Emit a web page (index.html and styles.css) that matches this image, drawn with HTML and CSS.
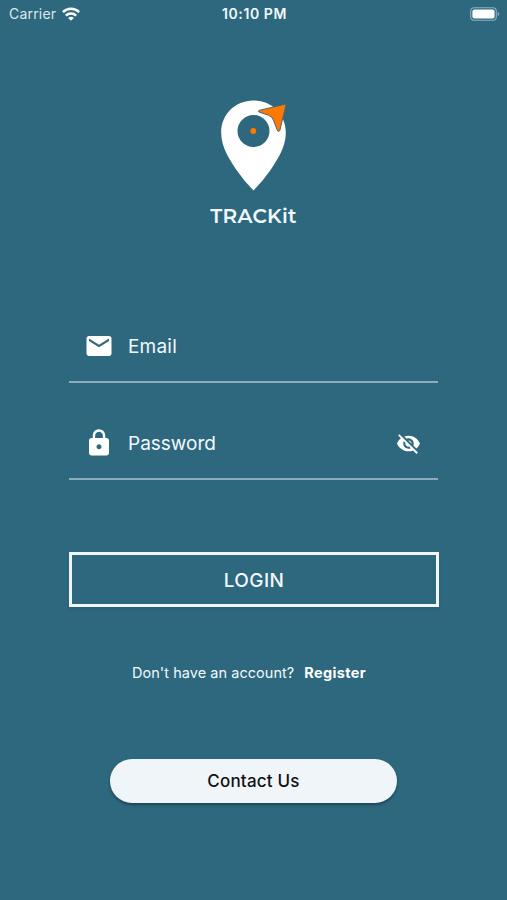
FILE: index.html
```html
<!DOCTYPE html>
<html lang="en">
<head>
  <meta charset="utf-8">
  <title>TRACKit</title>
  <link rel="stylesheet" href="styles.css">
</head>
<body>
  <!-- Status bar -->
  <header class="status-bar">
    <div class="carrier">
      <span>Carrier</span>
      <svg class="wifi" viewBox="0 0 18 14" fill="none" stroke="#fff" stroke-width="2.5">
        <path d="M.9 5.2C5.4.7 12.6.7 17.1 5.2"/>
        <path d="M3.8 8.6C6.7 5.8 11.3 5.8 14.2 8.6"/>
        <path d="M9 13.8 6.2 11Q9 8.7 11.8 11Z" fill="#fff" stroke="none"/>
      </svg>
    </div>
    <div class="time">10:10 PM</div>
    <svg class="battery" viewBox="0 0 30 14">
      <rect x=".7" y=".7" width="25.6" height="12.6" rx="3.5" fill="none" stroke="#8fb0be" stroke-width="1.1"/>
      <rect x="2.4" y="2.4" width="22.2" height="9.2" rx="2" fill="#fff"/>
      <path d="M27.7 5Q29.3 5.6 29.3 7T27.7 9Z" fill="#8fb0be"/>
    </svg>
  </header>

  <main class="login">
    <!-- Logo -->
    <div class="logo">
      <svg class="pin" viewBox="0 0 70 94">
        <path d="M34.5 1.5C16 1.5 2.2 15.5 2.2 33.5C2.2 49 11 61 17.5 71Q25 82 34.5 91.5Q44 82 51.5 71C58 61 66.8 49 66.8 33.5C66.8 15.5 53 1.5 34.5 1.5Z" fill="#fff"/>
        <circle cx="34.5" cy="32" r="16" fill="#2e687e"/>
        <circle cx="34.3" cy="32" r="3" fill="#ff7800"/>
        <path d="M67.2 5 40 11.4Q38.500 12.200 40 13L49.500 16.200Q53 17.500 54.400 21L58.500 31.800Q59.500 33.300 60.800 31.500Z" fill="#ff7800" stroke="#4d6570" stroke-width="1" stroke-linejoin="round"/>
      </svg>
      <h1 class="brand">TRACKit</h1>
    </div>

    <!-- Login form -->
    <form class="form">
      <div class="field">
        <svg class="icon" viewBox="0 0 24 24" fill="#fff">
          <path d="M20 4H4c-1.100 0-1.990.9-1.990 2L2 18c0 1.100.9 2 2 2h16c1.100 0 2-.9 2-2V6c0-1.100-.9-2-2-2zm0 4l-8 5-8-5V6l8 5 8-5v2z"/>
        </svg>
        <span class="label label-email">Email</span>
      </div>
      <div class="field">
        <svg class="icon" viewBox="0 0 24 24" fill="#fff">
          <path d="M18 8h-1V6c0-2.760-2.240-5-5-5S7 3.240 7 6v2H6c-1.100 0-2 .9-2 2v10c0 1.100.9 2 2 2h12c1.100 0 2-.9 2-2V10c0-1.100-.9-2-2-2zm-6 9c-1.100 0-2-.9-2-2s.9-2 2-2 2 .9 2 2-.9 2-2 2zm3.100-9H8.900V6c0-1.710 1.390-3.100 3.100-3.100 1.710 0 3.100 1.390 3.100 3.100v2z"/>
        </svg>
        <span class="label label-password">Password</span>
        <svg class="eye" viewBox="0 0 24 24" fill="#fff">
          <path d="M12 7c2.760 0 5 2.240 5 5 0 .65-.13 1.260-.36 1.830l2.920 2.920c1.510-1.260 2.700-2.890 3.430-4.750-1.730-4.390-6-7.500-11-7.500-1.400 0-2.740.25-3.980.7l2.160 2.160C10.740 7.130 11.350 7 12 7zM2 4.270l2.280 2.280.46.46C3.080 8.300 1.780 10.020 1 12c1.730 4.390 6 7.500 11 7.500 1.550 0 3.030-.3 4.380-.84l.42.42L19.730 22 21 20.730 3.270 3 2 4.270zM7.530 9.800l1.550 1.550c-.05.21-.08.43-.08.65 0 1.660 1.340 3 3 3 .22 0 .44-.03.65-.08l1.550 1.550c-.67.33-1.410.53-2.200.53-2.760 0-5-2.240-5-5 0-.79.2-1.530.53-2.200zm4.310-.78l3.150 3.150.02-.16c0-1.660-1.340-3-3-3l-.17.01z"/>
        </svg>
      </div>
      <button class="login-button" type="button">LOGIN</button>
    </form>

    <p class="signup"><span class="question">Don't have an account?</span><a class="register">Register</a></p>
    <button class="contact-button" type="button">Contact Us</button>
  </main>
</body>
</html>
```

FILE: styles.css
```css
/*Style for the page*/
body {
  margin: 0;
  height: 900px;
  background-color: #2e687e;
  color: #f2f8fc;
  font-family: Inter, "Liberation Sans", sans-serif;
  overflow: hidden;
}
/*Status bar*/
.status-bar {
  display: grid;
  grid-template-columns: 1fr auto 1fr;
  align-items: center;
  height: 27px;
  padding: 0 7px 0 9px;
  font-size: 14px;
}
.carrier {
  display: flex;
  align-items: center;
  gap: 6px;
  color: #dce8ee;
  letter-spacing: 0.2px;
}
.wifi {
  width: 18px;
  height: 14px;
}
.time {
  font-weight: 600;
  letter-spacing: 0.6px;
}
.battery {
  width: 30px;
  height: 14px;
  justify-self: end;
}
.login {
  display: flex;
  flex-direction: column;
  align-items: center;
}
/*Logo*/
.logo {
  display: flex;
  flex-direction: column;
  align-items: center;
  margin-top: 72px;
}
.pin {
  width: 70px;
  height: 94px;
}
.brand {
  margin: 10px 0 0;
  font-family: Montserrat, Inter, sans-serif;
  font-size: 20px;
  font-weight: 600;
  line-height: 26px;
  letter-spacing: 0.3px;
}
/*Form*/
.form {
  width: 369px;
  margin-top: 81px;
}
.field {
  display: flex;
  align-items: center;
  box-sizing: border-box;
  height: 73px;
  padding: 0 17px 0 15px;
  border-bottom: 2px solid #8caebb;
}
.field + .field {
  margin-top: 24px;
}
.icon {
  width: 30px;
  height: 30px;
}
.label {
  margin-left: 14px;
  padding-top: 2px;
  font-size: 19px;
}
.label-email {
  letter-spacing: 0.2px;
}
.eye {
  width: 25px;
  height: 25px;
  margin-left: auto;
  padding-top: 1px;
}
/*Buttons*/
.login-button {
  display: block;
  width: 370px;
  height: 55px;
  margin-top: 72px;
  padding-top: 2px;
  border: 3px solid #f0f6fa;
  background: none;
  box-shadow: 0 2px 3px rgba(0, 0, 0, 0.08);
  color: #f2f8fc;
  font-family: inherit;
  font-size: 19px;
  font-weight: 500;
  letter-spacing: 0.4px;
}
.signup {
  display: flex;
  gap: 10px;
  margin: 55px 0 0;
  padding-right: 9px;
  font-size: 14.5px;
  line-height: 22px;
}
.question {
  letter-spacing: 0.05px;
}
.register {
  color: #fff;
  font-weight: 700;
  letter-spacing: 0.35px;
}
.contact-button {
  width: 287px;
  height: 44px;
  margin-top: 75px;
  border: none;
  border-radius: 22px;
  background-color: #f0f5fa;
  box-shadow: 0 2px 3px rgba(0, 0, 0, 0.35);
  color: #111;
  font-family: inherit;
  font-size: 17px;
  font-weight: 500;
  letter-spacing: 0.2px;
}
```
